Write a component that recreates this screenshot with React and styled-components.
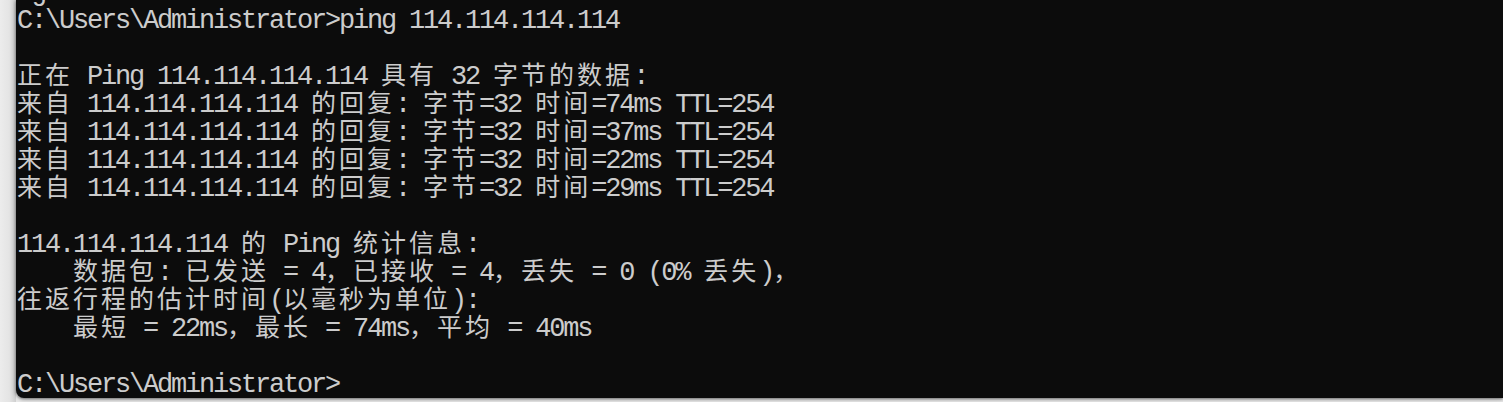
import React from 'react';
import styled, { createGlobalStyle } from 'styled-components';

const Global = createGlobalStyle`
  html, body { margin: 0; padding: 0; background: #ebebeb; }
  body { overflow: hidden; }
`;

const Desktop = styled.div`
  height: 402px;
  display: flex;
  padding-left: 16px;
  box-sizing: border-box;
  background: linear-gradient(to right, #ececec 0%, #e4e4e4 60%, #cfcfcf 100%) left top / 16px 100% no-repeat, #e9e9e9;
  overflow: hidden;
`;

const ConsoleWindow = styled.div`
  flex: 1;
  height: 398px;
  background: #0c0c0c;
  border-bottom-left-radius: 8px;
  box-shadow: 0 1px 3px rgba(0, 0, 0, 0.45), 0 0 6px rgba(0, 0, 0, 0.25);
  overflow: hidden;
  padding-left: 1px;
`;

const Buffer = styled.div`
  margin-top: -22px;
  color: #cccccc;
  font-family: "Liberation Mono", monospace;
  font-size: 27px;
  letter-spacing: -2.2px;
`;

const Line = styled.div`
  height: 28px;
  line-height: 28px;
  white-space: pre;
  padding-top: 1px;
  box-sizing: border-box;
`;

const Wide = styled.span`
  font-family: "Noto Sans CJK SC", sans-serif;
  font-size: 25px;
  letter-spacing: 3px;
  line-height: 20px;
`;

const CJK = /[\u3000-\u303f\u4e00-\u9fff\uff00-\uffef]/;

function splitRuns(text) {
  const runs = [];
  for (const ch of text) {
    const wide = CJK.test(ch);
    const last = runs[runs.length - 1];
    if (last && last.wide === wide) last.text += ch;
    else runs.push({ wide, text: ch });
  }
  return runs;
}

const output = [
  ' g',
  'C:\\Users\\Administrator>ping 114.114.114.114',
  '',
  '正在 Ping 114.114.114.114 具有 32 字节的数据:',
  '来自 114.114.114.114 的回复: 字节=32 时间=74ms TTL=254',
  '来自 114.114.114.114 的回复: 字节=32 时间=37ms TTL=254',
  '来自 114.114.114.114 的回复: 字节=32 时间=22ms TTL=254',
  '来自 114.114.114.114 的回复: 字节=32 时间=29ms TTL=254',
  '',
  '114.114.114.114 的 Ping 统计信息:',
  '    数据包: 已发送 = 4，已接收 = 4，丢失 = 0 (0% 丢失)，',
  '往返行程的估计时间(以毫秒为单位):',
  '    最短 = 22ms，最长 = 74ms，平均 = 40ms',
  '',
  'C:\\Users\\Administrator>',
];

function ConsoleLine({ text }) {
  return (
    <Line>
      {text === ''
        ? ' '
        : splitRuns(text).map((r, i) =>
            r.wide ? <Wide key={i}>{r.text}</Wide> : <React.Fragment key={i}>{r.text}</React.Fragment>
          )}
    </Line>
  );
}

export default function App() {
  return (
    <>
      <Global />
      <Desktop>
        <ConsoleWindow>
          <Buffer>
            {output.map((t, i) => (
              <ConsoleLine key={i} text={t} />
            ))}
          </Buffer>
        </ConsoleWindow>
      </Desktop>
    </>
  );
}
